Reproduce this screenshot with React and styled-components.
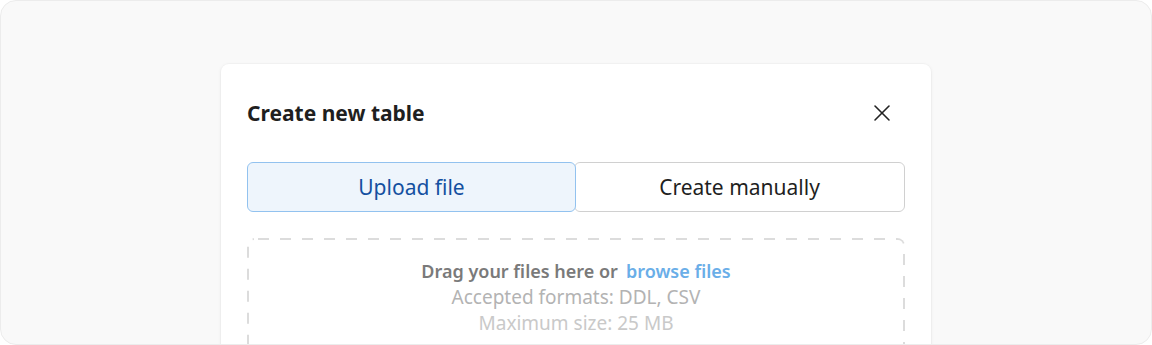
import React, { useState } from "react";
import styled, { createGlobalStyle } from "styled-components";
import { X } from "lucide-react";

const GlobalStyle = createGlobalStyle`
  html, body {
    margin: 0;
    padding: 0;
    background: #ffffff;
  }
  body {
    font-family: "Noto Sans", Lato, sans-serif;
    -webkit-font-smoothing: antialiased;
  }
`;

const dashes = encodeURIComponent(
  "<svg xmlns='http://www.w3.org/2000/svg' width='100%' height='100%'><rect width='100%' height='100%' rx='7' ry='7' fill='none' stroke='#dcdcdc' stroke-width='4' stroke-dasharray='11 11' stroke-dashoffset='-4'/></svg>"
);

const Frame = styled.div`
  width: 1152px;
  height: 345px;
  box-sizing: border-box;
  background: #f9f9f9;
  border: 1px solid #ececec;
  border-radius: 16px;
  overflow: hidden;
  display: flex;
  justify-content: center;
  padding-top: 63px;
`;

const Card = styled.div`
  width: 710px;
  height: 400px;
  box-sizing: border-box;
  background: #ffffff;
  border-radius: 8px;
  box-shadow: 0 1px 4px rgba(0, 0, 0, 0.06), 0 0 0 1px rgba(0, 0, 0, 0.02);
  padding: 26px 26px 0;
  display: flex;
  flex-direction: column;
  gap: 26px;
`;

const Header = styled.div`
  height: 46px;
  display: flex;
  align-items: center;
  justify-content: space-between;
`;

const Title = styled.h2`
  margin: 0;
  font-size: 21px;
  font-weight: 700;
  color: #1f1f1f;
`;

const CloseButton = styled.button`
  border: none;
  background: none;
  padding: 0;
  margin-right: 9px;
  width: 28px;
  height: 28px;
  display: flex;
  align-items: center;
  justify-content: center;
  color: #222;
  cursor: pointer;
`;

const Tabs = styled.div`
  display: grid;
  grid-template-columns: 1fr 1fr;
  height: 50px;
`;

const Tab = styled.button`
  font-family: "Noto Sans", Lato, sans-serif;
  font-size: 21px;
  font-weight: 400;
  border-radius: 6px;
  cursor: pointer;
  background: ${(p) => (p.$active ? "#eef5fc" : "#ffffff")};
  color: ${(p) => (p.$active ? "#1450a0" : "#1f1f1f")};
  border: 1.5px solid ${(p) => (p.$active ? "#92c2ef" : "#d0d0d0")};
  position: relative;
  z-index: ${(p) => (p.$active ? 1 : 0)};
  margin-left: ${(p) => (p.$active ? "0" : "-2px")};
`;

const DropZone = styled.div`
  background-image: url("data:image/svg+xml,${dashes}");
  border-radius: 8px;
  height: 200px;
  padding-top: 20px;
  display: flex;
  flex-direction: column;
  align-items: center;
  font-size: 19px;
  line-height: 26px;
`;

const Line = styled.div`
  color: ${(p) => p.$color};
  font-weight: ${(p) => (p.$bold ? 600 : 400)};
  font-size: ${(p) => (p.$bold ? "18px" : "inherit")};
`;

const Link = styled.a`
  color: #6aaee8;
  margin-left: 8px;
  cursor: pointer;
`;

export default function App() {
  const [tab, setTab] = useState("upload");
  return (
    <>
      <GlobalStyle />
      <Frame>
        <Card>
          <Header>
            <Title>Create new table</Title>
            <CloseButton aria-label="Close">
              <X size={28} strokeWidth={1.3} />
            </CloseButton>
          </Header>
          <Tabs>
            <Tab $active={tab === "upload"} onClick={() => setTab("upload")}>
              Upload file
            </Tab>
            <Tab $active={tab === "manual"} onClick={() => setTab("manual")}>
              Create manually
            </Tab>
          </Tabs>
          <DropZone>
            <Line $color="#7a7a7a" $bold>
              Drag your files here or<Link>browse files</Link>
            </Line>
            <Line $color="#b3b3b3">Accepted formats: DDL, CSV</Line>
            <Line $color="#c9c9c9">Maximum size: 25 MB</Line>
          </DropZone>
        </Card>
      </Frame>
    </>
  );
}
